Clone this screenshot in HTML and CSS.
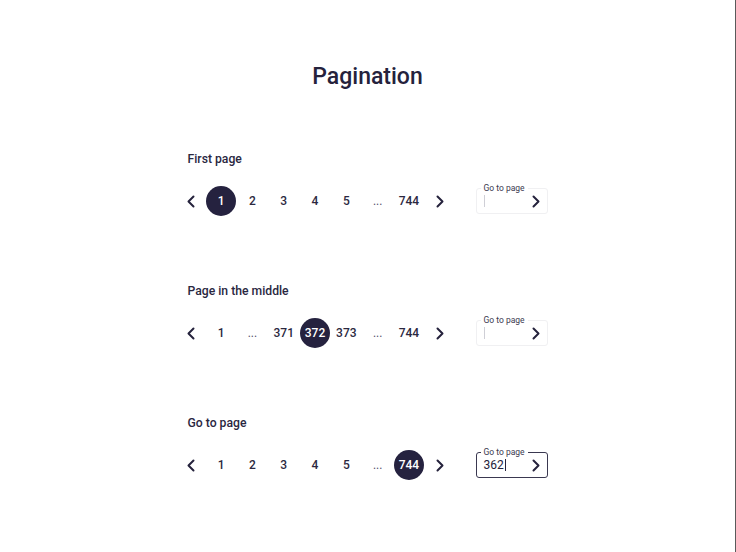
FILE: index.html
```html
<!DOCTYPE html>
<html lang="en">
<head>
<meta charset="utf-8">
<title>Pagination</title>
<link rel="stylesheet" href="styles.css">
</head>
<body>
<main class="page">
  <h1 class="title">Pagination</h1>

  <section class="demo">
    <h2 class="demo-label">First page</h2>
    <div class="demo-row">
      <nav class="pager">
        <button class="arrow prev" aria-label="Previous"><svg width="8" height="13" viewBox="0 0 8 13"><polyline points="6.5,1.5 1.5,6.5 6.5,11.5" fill="none" stroke="currentColor" stroke-width="2" stroke-linecap="round" stroke-linejoin="round"/></svg></button>
        <span class="item"><span class="num current">1</span></span>
        <span class="item"><span class="num">2</span></span>
        <span class="item"><span class="num">3</span></span>
        <span class="item"><span class="num">4</span></span>
        <span class="item"><span class="num">5</span></span>
        <span class="item"><span class="num dots">...</span></span>
        <span class="item"><span class="num">744</span></span>
        <button class="arrow next" aria-label="Next"><svg width="8" height="13" viewBox="0 0 8 13"><polyline points="1.5,1.5 6.5,6.5 1.5,11.5" fill="none" stroke="currentColor" stroke-width="2" stroke-linecap="round" stroke-linejoin="round"/></svg></button>
      </nav>
      <div class="goto">
        <span class="goto-label">Go to page</span>
        <span class="goto-value"><span class="caret"></span></span>
        <svg class="goto-arrow" width="8" height="13" viewBox="0 0 8 13"><polyline points="1.5,1.5 6.5,6.5 1.5,11.5" fill="none" stroke="currentColor" stroke-width="2" stroke-linecap="round" stroke-linejoin="round"/></svg>
      </div>
    </div>
  </section>

  <section class="demo">
    <h2 class="demo-label">Page in the middle</h2>
    <div class="demo-row">
      <nav class="pager">
        <button class="arrow prev" aria-label="Previous"><svg width="8" height="13" viewBox="0 0 8 13"><polyline points="6.5,1.5 1.5,6.5 6.5,11.5" fill="none" stroke="currentColor" stroke-width="2" stroke-linecap="round" stroke-linejoin="round"/></svg></button>
        <span class="item"><span class="num">1</span></span>
        <span class="item"><span class="num dots">...</span></span>
        <span class="item"><span class="num">371</span></span>
        <span class="item"><span class="num current">372</span></span>
        <span class="item"><span class="num">373</span></span>
        <span class="item"><span class="num dots">...</span></span>
        <span class="item"><span class="num">744</span></span>
        <button class="arrow next" aria-label="Next"><svg width="8" height="13" viewBox="0 0 8 13"><polyline points="1.5,1.5 6.5,6.5 1.5,11.5" fill="none" stroke="currentColor" stroke-width="2" stroke-linecap="round" stroke-linejoin="round"/></svg></button>
      </nav>
      <div class="goto">
        <span class="goto-label">Go to page</span>
        <span class="goto-value"><span class="caret"></span></span>
        <svg class="goto-arrow" width="8" height="13" viewBox="0 0 8 13"><polyline points="1.5,1.5 6.5,6.5 1.5,11.5" fill="none" stroke="currentColor" stroke-width="2" stroke-linecap="round" stroke-linejoin="round"/></svg>
      </div>
    </div>
  </section>

  <section class="demo">
    <h2 class="demo-label">Go to page</h2>
    <div class="demo-row">
      <nav class="pager">
        <button class="arrow prev" aria-label="Previous"><svg width="8" height="13" viewBox="0 0 8 13"><polyline points="6.5,1.5 1.5,6.5 6.5,11.5" fill="none" stroke="currentColor" stroke-width="2" stroke-linecap="round" stroke-linejoin="round"/></svg></button>
        <span class="item"><span class="num">1</span></span>
        <span class="item"><span class="num">2</span></span>
        <span class="item"><span class="num">3</span></span>
        <span class="item"><span class="num">4</span></span>
        <span class="item"><span class="num">5</span></span>
        <span class="item"><span class="num dots">...</span></span>
        <span class="item"><span class="num current">744</span></span>
        <button class="arrow next" aria-label="Next"><svg width="8" height="13" viewBox="0 0 8 13"><polyline points="1.5,1.5 6.5,6.5 1.5,11.5" fill="none" stroke="currentColor" stroke-width="2" stroke-linecap="round" stroke-linejoin="round"/></svg></button>
      </nav>
      <div class="goto active">
        <span class="goto-label">Go to page</span>
        <span class="goto-value">362<span class="caret"></span></span>
        <svg class="goto-arrow" width="8" height="13" viewBox="0 0 8 13"><polyline points="1.5,1.5 6.5,6.5 1.5,11.5" fill="none" stroke="currentColor" stroke-width="2" stroke-linecap="round" stroke-linejoin="round"/></svg>
      </div>
    </div>
  </section>
</main>
</body>
</html>
```

FILE: styles.css
```css
* { box-sizing: border-box; }

html, body { height: 100%; }

body {
  margin: 0;
  background: #ffffff;
  color: #25223c;
  font-family: Roboto, "Liberation Sans", sans-serif;
  border-right: 1px solid #5a5a5a;
}

.page {
  width: 360px;
  margin: 0 auto;
  padding-top: 63px;
  display: flex;
  flex-direction: column;
}

.title {
  margin: 0 0 60px;
  font-size: 23px;
  line-height: 28px;
  font-weight: 500;
  text-align: center;
  color: #25223c;
}

.demo {
  display: flex;
  flex-direction: column;
  gap: 19px;
  margin-bottom: 67px;
}

.demo-label {
  margin: 0;
  font-size: 12.2px;
  line-height: 16px;
  font-weight: 500;
  color: #2a273f;
}

.demo-row {
  display: flex;
  align-items: center;
  height: 30px;
}

.pager {
  display: flex;
  align-items: center;
  margin-left: -1px;
}

.arrow {
  border: 0;
  background: none;
  padding: 0;
  margin: 0;
  width: 8px;
  height: 13px;
  color: #25223c;
  display: flex;
  cursor: pointer;
}

.prev { margin-right: 11px; }
.next { margin-left: 11px; }

.item {
  width: 31.3px;
  height: 30px;
  display: flex;
  align-items: center;
  justify-content: center;
}

.num {
  min-width: 30px;
  height: 30px;
  border-radius: 15px;
  display: flex;
  align-items: center;
  justify-content: center;
  font-size: 12px;
  font-weight: 500;
  color: #2b2840;
}

.num.dots {
  font-weight: 400;
  color: #55526a;
}

.num.current {
  background: #25223f;
  color: #ffffff;
}

.goto {
  margin-left: auto;
  position: relative;
  width: 72px;
  height: 26px;
  border: 1px solid #f0f0f2;
  border-radius: 3px;
  display: flex;
  align-items: center;
  padding: 0 7px;
  color: #25223c;
}

.goto.active {
  border-color: #3a3850;
}

.goto-label {
  position: absolute;
  left: 4px;
  top: -6px;
  padding: 0 3px;
  background: #ffffff;
  font-size: 8.5px;
  line-height: 11px;
  color: #3c3a50;
}

.goto-value {
  flex: 1;
  display: flex;
  align-items: center;
  font-size: 12px;
  font-weight: 400;
  color: #25223c;
}

.caret {
  width: 1px;
  height: 12px;
  background: #b9b8c2;
  margin-left: 1px;
}

.goto:not(.active) .caret { margin-left: 0; background: #cfcfd6; }
.goto.active .caret { background: #25223c; }

.goto-arrow {
  display: block;
  color: #25223c;
}
```
